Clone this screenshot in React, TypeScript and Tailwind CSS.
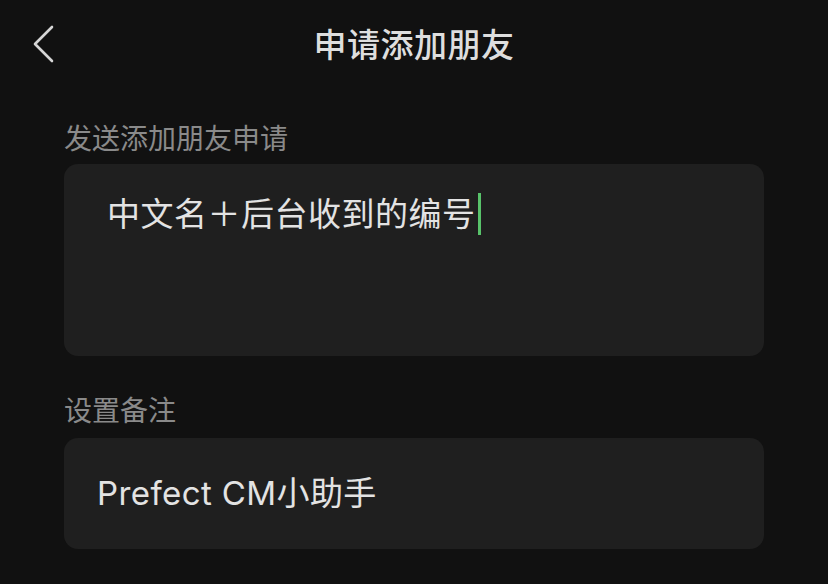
const font = { fontFamily: 'Inter, "Noto Sans CJK SC", "Noto Sans", sans-serif' };

export default function App() {
  return (
    <div className="h-[584px] w-[828px] overflow-hidden bg-[#111111] text-[#e3e3e3]" style={font}>
      <header className="relative flex h-[90px] items-center justify-center">
        <svg className="absolute left-[30px] top-[22px]" width="28" height="44" viewBox="0 0 28 44" fill="none">
          <path d="M22 5 L5 22 L22 39" stroke="#d6d6d6" strokeWidth="2.6" strokeLinecap="round" strokeLinejoin="round" />
        </svg>
        <h1 className="text-[33px] font-medium leading-none tracking-[0.5px] text-[#dedede]">申请添加朋友</h1>
      </header>

      <main className="px-[64px]">
        <p className="mt-[30px] text-[28px] leading-[38px] text-[#8a8a8a]">发送添加朋友申请</p>
        <div className="mt-[6px] h-[192px] rounded-[14px] bg-[#1f1f1f] px-[43px] pt-[28px]">
          <div className="flex items-center text-[33px] leading-[44px] tracking-[0.5px]">
            <span>中文名＋后台收到的编号</span>
            <span className="ml-[2px] h-[42px] w-[3px] bg-[#58c36a]" />
          </div>
        </div>

        <p className="mt-[36px] text-[28px] leading-[38px] text-[#8a8a8a]">设置备注</p>
        <div className="mt-[8px] flex h-[111px] items-center rounded-[14px] bg-[#1f1f1f] px-[33px]">
          <span className="text-[33px] leading-none tracking-[0.4px]">Prefect CM小助手</span>
        </div>
      </main>
    </div>
  );
}
